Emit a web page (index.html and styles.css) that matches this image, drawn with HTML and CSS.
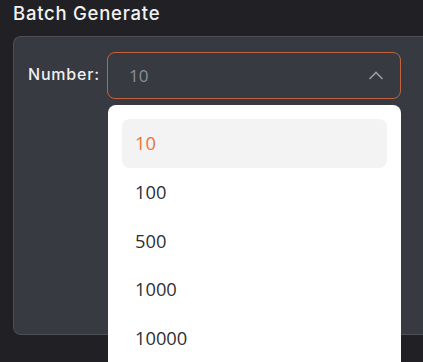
FILE: index.html
```html
<!DOCTYPE html>
<html>
<head>
<meta charset="utf-8">
<link rel="stylesheet" href="styles.css">
</head>
<body>
<div class="page">
  <h1 class="title">Batch Generate</h1>
  <div class="card">
    <div class="row">
      <span class="label">Number:</span>
      <div class="select-wrap">
        <div class="select">
          <span class="value">10</span>
          <svg class="chev" width="16" height="9" viewBox="0 0 16 9"><path d="M1.5 8 L8 1.5 L14.5 8" fill="none" stroke="#9a9ca1" stroke-width="1.6"/></svg>
        </div>
        <ul class="menu">
          <li class="item active">10</li>
          <li class="item">100</li>
          <li class="item">500</li>
          <li class="item">1000</li>
          <li class="item">10000</li>
        </ul>
      </div>
    </div>
  </div>
</div>
</body>
</html>
```
FILE: styles.css
```css
html, body {
  margin: 0;
  padding: 0;
  background: #212125;
  font-family: "Open Sans", "Noto Sans", sans-serif;
  overflow: hidden;
  height: 362px;
}
.page {
  padding: 0 0 0 13px;
}
.title {
  margin: 0;
  height: 36px;
  line-height: 27px;
  font-family: Inter, "Open Sans", sans-serif;
  font-size: 18.5px;
  font-weight: 500;
  letter-spacing: 0.75px;
  color: #f2f2f2;
}
.card {
  background: #373a40;
  border: 1px solid #4b4e54;
  border-right: none;
  border-radius: 8px 0 0 8px;
  padding: 15px 0 0 14px;
  box-sizing: border-box;
  height: 299px;
}
.row {
  display: flex;
  align-items: flex-start;
}
.label {
  color: #f0f0f0;
  font-family: Inter, "Open Sans", sans-serif;
  font-size: 16px;
  font-weight: 500;
  letter-spacing: 0.8px;
  line-height: 45px;
  width: 79px;
}
.select-wrap {
  position: relative;
  width: 294px;
}
.select {
  box-sizing: border-box;
  height: 47px;
  border: 1px solid #c3623f;
  border-radius: 8px;
  display: flex;
  align-items: center;
  justify-content: space-between;
  padding: 0 16px 0 21px;
}
.value {
  color: #8d8f94;
  font-size: 17px;
}
.chev {
  display: block;
}
.menu {
  position: absolute;
  left: 1px;
  top: 53px;
  width: 293px;
  height: 257px;
  overflow: hidden;
  margin: 0;
  padding: 14px 14px 0 14px;
  box-sizing: border-box;
  list-style: none;
  background: #ffffff;
  border-radius: 8px 8px 0 0;
}
.item {
  height: 48.5px;
  line-height: 47px;
  padding-left: 13px;
  font-size: 18.3px;
  color: #2f2f33;
  border-radius: 8px;
}
.item.active {
  height: 49px;
  background: #f3f3f3;
  color: #e8743c;
}
```
